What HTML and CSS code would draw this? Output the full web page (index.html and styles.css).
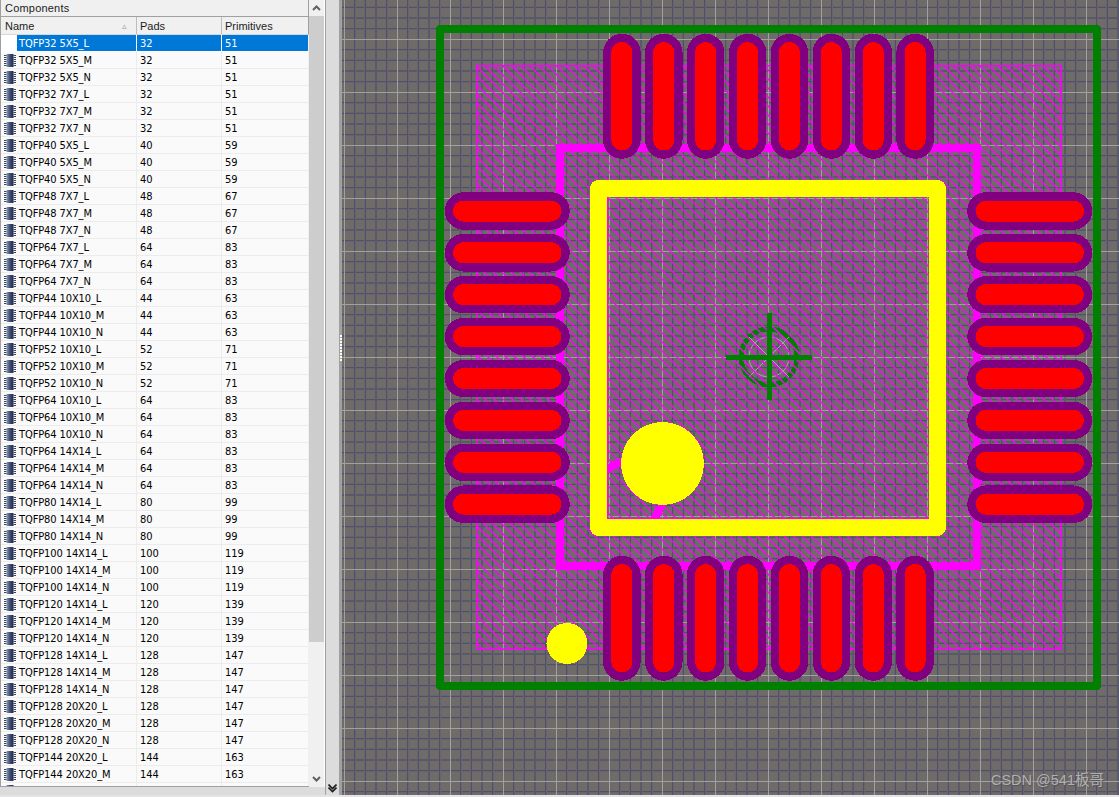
FILE: index.html
```html
<!DOCTYPE html>
<html lang="en">
<head>
<meta charset="utf-8">
<title>Components</title>
<link rel="stylesheet" href="styles.css">
</head>
<body>
<svg class="defs" width="0" height="0" aria-hidden="true">
  <defs>
    <linearGradient id="chipFill" x1="0" x2="1" y1="0" y2="0">
      <stop offset="0" stop-color="#8d99b5"/>
      <stop offset="0.5" stop-color="#3f4d74"/>
      <stop offset="1" stop-color="#1f2a47"/>
    </linearGradient>
    <symbol id="chip" viewBox="0 0 12 13">
      <rect x="2.5" y="0" width="7" height="13" fill="url(#chipFill)"/>
      <path d="M0 1.5h2.5M0 3.5h2.5M0 5.5h2.5M0 7.5h2.5M0 9.5h2.5M0 11.5h2.5M9.5 1.5h2.5M9.5 3.5h2.5M9.5 5.5h2.5M9.5 7.5h2.5M9.5 9.5h2.5M9.5 11.5h2.5" stroke="#39435f" stroke-width="1" fill="none"/>
    </symbol>
  </defs>
</svg>
<div class="app">
  <div class="main">
    <aside class="side">
      <section class="panel">
        <div class="panel-title">Components</div>
        <div class="list-head">
          <div class="hcell hcell-name">Name<span class="sort">▵</span></div>
          <div class="hcell hcell-pads">Pads</div>
          <div class="hcell hcell-prim">Primitives</div>
        </div>
        <div class="rows">
          <div class="row row-selected"><span class="c-icon"></span><span class="c-name">TQFP32 5X5_L</span><span class="c-pads">32</span><span class="c-prim">51</span></div>
          <div class="row"><span class="c-icon"><svg class="chip"><use href="#chip"/></svg></span><span class="c-name">TQFP32 5X5_M</span><span class="c-pads">32</span><span class="c-prim">51</span></div>
          <div class="row"><span class="c-icon"><svg class="chip"><use href="#chip"/></svg></span><span class="c-name">TQFP32 5X5_N</span><span class="c-pads">32</span><span class="c-prim">51</span></div>
          <div class="row"><span class="c-icon"><svg class="chip"><use href="#chip"/></svg></span><span class="c-name">TQFP32 7X7_L</span><span class="c-pads">32</span><span class="c-prim">51</span></div>
          <div class="row"><span class="c-icon"><svg class="chip"><use href="#chip"/></svg></span><span class="c-name">TQFP32 7X7_M</span><span class="c-pads">32</span><span class="c-prim">51</span></div>
          <div class="row"><span class="c-icon"><svg class="chip"><use href="#chip"/></svg></span><span class="c-name">TQFP32 7X7_N</span><span class="c-pads">32</span><span class="c-prim">51</span></div>
          <div class="row"><span class="c-icon"><svg class="chip"><use href="#chip"/></svg></span><span class="c-name">TQFP40 5X5_L</span><span class="c-pads">40</span><span class="c-prim">59</span></div>
          <div class="row"><span class="c-icon"><svg class="chip"><use href="#chip"/></svg></span><span class="c-name">TQFP40 5X5_M</span><span class="c-pads">40</span><span class="c-prim">59</span></div>
          <div class="row"><span class="c-icon"><svg class="chip"><use href="#chip"/></svg></span><span class="c-name">TQFP40 5X5_N</span><span class="c-pads">40</span><span class="c-prim">59</span></div>
          <div class="row"><span class="c-icon"><svg class="chip"><use href="#chip"/></svg></span><span class="c-name">TQFP48 7X7_L</span><span class="c-pads">48</span><span class="c-prim">67</span></div>
          <div class="row"><span class="c-icon"><svg class="chip"><use href="#chip"/></svg></span><span class="c-name">TQFP48 7X7_M</span><span class="c-pads">48</span><span class="c-prim">67</span></div>
          <div class="row"><span class="c-icon"><svg class="chip"><use href="#chip"/></svg></span><span class="c-name">TQFP48 7X7_N</span><span class="c-pads">48</span><span class="c-prim">67</span></div>
          <div class="row"><span class="c-icon"><svg class="chip"><use href="#chip"/></svg></span><span class="c-name">TQFP64 7X7_L</span><span class="c-pads">64</span><span class="c-prim">83</span></div>
          <div class="row"><span class="c-icon"><svg class="chip"><use href="#chip"/></svg></span><span class="c-name">TQFP64 7X7_M</span><span class="c-pads">64</span><span class="c-prim">83</span></div>
          <div class="row"><span class="c-icon"><svg class="chip"><use href="#chip"/></svg></span><span class="c-name">TQFP64 7X7_N</span><span class="c-pads">64</span><span class="c-prim">83</span></div>
          <div class="row"><span class="c-icon"><svg class="chip"><use href="#chip"/></svg></span><span class="c-name">TQFP44 10X10_L</span><span class="c-pads">44</span><span class="c-prim">63</span></div>
          <div class="row"><span class="c-icon"><svg class="chip"><use href="#chip"/></svg></span><span class="c-name">TQFP44 10X10_M</span><span class="c-pads">44</span><span class="c-prim">63</span></div>
          <div class="row"><span class="c-icon"><svg class="chip"><use href="#chip"/></svg></span><span class="c-name">TQFP44 10X10_N</span><span class="c-pads">44</span><span class="c-prim">63</span></div>
          <div class="row"><span class="c-icon"><svg class="chip"><use href="#chip"/></svg></span><span class="c-name">TQFP52 10X10_L</span><span class="c-pads">52</span><span class="c-prim">71</span></div>
          <div class="row"><span class="c-icon"><svg class="chip"><use href="#chip"/></svg></span><span class="c-name">TQFP52 10X10_M</span><span class="c-pads">52</span><span class="c-prim">71</span></div>
          <div class="row"><span class="c-icon"><svg class="chip"><use href="#chip"/></svg></span><span class="c-name">TQFP52 10X10_N</span><span class="c-pads">52</span><span class="c-prim">71</span></div>
          <div class="row"><span class="c-icon"><svg class="chip"><use href="#chip"/></svg></span><span class="c-name">TQFP64 10X10_L</span><span class="c-pads">64</span><span class="c-prim">83</span></div>
          <div class="row"><span class="c-icon"><svg class="chip"><use href="#chip"/></svg></span><span class="c-name">TQFP64 10X10_M</span><span class="c-pads">64</span><span class="c-prim">83</span></div>
          <div class="row"><span class="c-icon"><svg class="chip"><use href="#chip"/></svg></span><span class="c-name">TQFP64 10X10_N</span><span class="c-pads">64</span><span class="c-prim">83</span></div>
          <div class="row"><span class="c-icon"><svg class="chip"><use href="#chip"/></svg></span><span class="c-name">TQFP64 14X14_L</span><span class="c-pads">64</span><span class="c-prim">83</span></div>
          <div class="row"><span class="c-icon"><svg class="chip"><use href="#chip"/></svg></span><span class="c-name">TQFP64 14X14_M</span><span class="c-pads">64</span><span class="c-prim">83</span></div>
          <div class="row"><span class="c-icon"><svg class="chip"><use href="#chip"/></svg></span><span class="c-name">TQFP64 14X14_N</span><span class="c-pads">64</span><span class="c-prim">83</span></div>
          <div class="row"><span class="c-icon"><svg class="chip"><use href="#chip"/></svg></span><span class="c-name">TQFP80 14X14_L</span><span class="c-pads">80</span><span class="c-prim">99</span></div>
          <div class="row"><span class="c-icon"><svg class="chip"><use href="#chip"/></svg></span><span class="c-name">TQFP80 14X14_M</span><span class="c-pads">80</span><span class="c-prim">99</span></div>
          <div class="row"><span class="c-icon"><svg class="chip"><use href="#chip"/></svg></span><span class="c-name">TQFP80 14X14_N</span><span class="c-pads">80</span><span class="c-prim">99</span></div>
          <div class="row"><span class="c-icon"><svg class="chip"><use href="#chip"/></svg></span><span class="c-name">TQFP100 14X14_L</span><span class="c-pads">100</span><span class="c-prim">119</span></div>
          <div class="row"><span class="c-icon"><svg class="chip"><use href="#chip"/></svg></span><span class="c-name">TQFP100 14X14_M</span><span class="c-pads">100</span><span class="c-prim">119</span></div>
          <div class="row"><span class="c-icon"><svg class="chip"><use href="#chip"/></svg></span><span class="c-name">TQFP100 14X14_N</span><span class="c-pads">100</span><span class="c-prim">119</span></div>
          <div class="row"><span class="c-icon"><svg class="chip"><use href="#chip"/></svg></span><span class="c-name">TQFP120 14X14_L</span><span class="c-pads">120</span><span class="c-prim">139</span></div>
          <div class="row"><span class="c-icon"><svg class="chip"><use href="#chip"/></svg></span><span class="c-name">TQFP120 14X14_M</span><span class="c-pads">120</span><span class="c-prim">139</span></div>
          <div class="row"><span class="c-icon"><svg class="chip"><use href="#chip"/></svg></span><span class="c-name">TQFP120 14X14_N</span><span class="c-pads">120</span><span class="c-prim">139</span></div>
          <div class="row"><span class="c-icon"><svg class="chip"><use href="#chip"/></svg></span><span class="c-name">TQFP128 14X14_L</span><span class="c-pads">128</span><span class="c-prim">147</span></div>
          <div class="row"><span class="c-icon"><svg class="chip"><use href="#chip"/></svg></span><span class="c-name">TQFP128 14X14_M</span><span class="c-pads">128</span><span class="c-prim">147</span></div>
          <div class="row"><span class="c-icon"><svg class="chip"><use href="#chip"/></svg></span><span class="c-name">TQFP128 14X14_N</span><span class="c-pads">128</span><span class="c-prim">147</span></div>
          <div class="row"><span class="c-icon"><svg class="chip"><use href="#chip"/></svg></span><span class="c-name">TQFP128 20X20_L</span><span class="c-pads">128</span><span class="c-prim">147</span></div>
          <div class="row"><span class="c-icon"><svg class="chip"><use href="#chip"/></svg></span><span class="c-name">TQFP128 20X20_M</span><span class="c-pads">128</span><span class="c-prim">147</span></div>
          <div class="row"><span class="c-icon"><svg class="chip"><use href="#chip"/></svg></span><span class="c-name">TQFP128 20X20_N</span><span class="c-pads">128</span><span class="c-prim">147</span></div>
          <div class="row"><span class="c-icon"><svg class="chip"><use href="#chip"/></svg></span><span class="c-name">TQFP144 20X20_L</span><span class="c-pads">144</span><span class="c-prim">163</span></div>
          <div class="row"><span class="c-icon"><svg class="chip"><use href="#chip"/></svg></span><span class="c-name">TQFP144 20X20_M</span><span class="c-pads">144</span><span class="c-prim">163</span></div>
          <div class="row"><span class="c-icon"><svg class="chip"><use href="#chip"/></svg></span><span class="c-name"></span><span class="c-pads"></span><span class="c-prim"></span></div>
        </div>
      </section>
      <div class="vscroll">
        <div class="vscroll-btn"><svg class="arrow" viewBox="0 0 9 6"><path d="M1 5l3.5-3.5L8 5" fill="none" stroke="#606060" stroke-width="2"/></svg></div>
        <div class="vscroll-thumb"></div>
        <div class="vscroll-track"></div>
        <div class="vscroll-btn vscroll-btn-down"><svg class="arrow" viewBox="0 0 9 6"><path d="M1 1l3.5 3.5L8 1" fill="none" stroke="#606060" stroke-width="2"/></svg></div>
      </div>
      <div class="dock">
        <svg class="dock-glyph" viewBox="0 0 9 9"><path d="M0.5 0.5l4 4 4-4M0.5 3.5l4 4 4-4" fill="none" stroke="#1c1c1c" stroke-width="1.6"/></svg>
      </div>
      <div class="sash"><span class="grip"></span></div>
    </aside>
    <div class="canvas">
      <svg class="board" viewBox="342 0 777 795" width="777" height="795">
        <defs>
          <clipPath id="hatchClip"><rect x="476" y="65" width="586" height="585"/></clipPath>
          <line id="hl" class="hatch-line" x1="0" y1="0" x2="700" y2="700"/>
          <g id="h6"><use href="#hl" x="0"/><use href="#hl" x="9"/><use href="#hl" x="18"/><use href="#hl" x="27"/><use href="#hl" x="36"/><use href="#hl" x="45"/></g>
          <g id="h36"><use href="#h6" x="0"/><use href="#h6" x="54"/><use href="#h6" x="108"/><use href="#h6" x="162"/><use href="#h6" x="216"/><use href="#h6" x="270"/></g>
          <g id="padV">
            <line class="pad-mask" x1="0" y1="0" x2="0" y2="87.5"/>
            <line class="pad-red" x1="0" y1="0" x2="0" y2="87.5"/>
          </g>
          <g id="padH">
            <line class="pad-mask" x1="0" y1="0" x2="87.5" y2="0"/>
            <line class="pad-red" x1="0" y1="0" x2="87.5" y2="0"/>
          </g>
        </defs>
        <g class="target">
          <circle class="target-ring" cx="769" cy="357" r="28"/>
          <circle class="target-inner" cx="769" cy="357" r="20"/>
          <path class="target-inner" d="M749 337L789 377M789 337L749 377"/>
        </g>
        <g clip-path="url(#hatchClip)">
          <use href="#h36" x="-110" y="65"/>
          <use href="#h36" x="214" y="65"/>
          <use href="#h36" x="538" y="65"/>
          <use href="#h36" x="862" y="65"/>
        </g>
        <line class="target-cross" x1="769" y1="313" x2="769" y2="400"/>
        <line class="target-cross" x1="726" y1="357" x2="812" y2="357"/>
        <rect class="hatch-edge" x="476.75" y="65.75" width="584.5" height="583.5"/>
        <rect class="outline" x="440" y="29" width="657" height="657"/>
        <rect class="courtyard" x="560" y="148" width="417" height="418"/>
        <path class="courtyard-arc" d="M626 461Q614 463 604 472M664 500Q660 510 652 522"/>
        <path class="edge" d="M607 196H930V519H607ZM608 197V518H929V197Z"/>
        <rect class="silk" x="598.5" y="188.5" width="339" height="339"/>
        <circle class="dot" cx="662.5" cy="463.5" r="41.5"/>
        <circle class="dot" cx="567" cy="643.5" r="20.5"/>
        <g>
          <use href="#padV" x="621.9" y="52.5"/><use href="#padV" x="663.8" y="52.5"/><use href="#padV" x="705.7" y="52.5"/><use href="#padV" x="747.6" y="52.5"/><use href="#padV" x="789.5" y="52.5"/><use href="#padV" x="831.4" y="52.5"/><use href="#padV" x="873.3" y="52.5"/><use href="#padV" x="915.1" y="52.5"/>
          <use href="#padV" x="621.9" y="574.5"/><use href="#padV" x="663.8" y="574.5"/><use href="#padV" x="705.7" y="574.5"/><use href="#padV" x="747.6" y="574.5"/><use href="#padV" x="789.5" y="574.5"/><use href="#padV" x="831.4" y="574.5"/><use href="#padV" x="873.3" y="574.5"/><use href="#padV" x="915.1" y="574.5"/>
          <use href="#padH" x="463.5" y="211"/><use href="#padH" x="463.5" y="252.8"/><use href="#padH" x="463.5" y="294.7"/><use href="#padH" x="463.5" y="336.6"/><use href="#padH" x="463.5" y="378.5"/><use href="#padH" x="463.5" y="420.4"/><use href="#padH" x="463.5" y="462.3"/><use href="#padH" x="463.5" y="504.2"/>
          <use href="#padH" x="986" y="211"/><use href="#padH" x="986" y="252.8"/><use href="#padH" x="986" y="294.7"/><use href="#padH" x="986" y="336.6"/><use href="#padH" x="986" y="378.5"/><use href="#padH" x="986" y="420.4"/><use href="#padH" x="986" y="462.3"/><use href="#padH" x="986" y="504.2"/>
        </g>
      </svg>
      <div class="watermark">CSDN @541板哥</div>
    </div>
  </div>
  <div class="statusline"></div>
</div>
</body>
</html>
```
FILE: styles.css
```css
* { box-sizing: border-box; }
html, body { margin: 0; height: 100%; overflow: hidden; }
body {
  font-family: "Liberation Sans", Arial, sans-serif;
  font-size: 11px;
  color: #000;
  background: #dcdcdc;
}
.defs { position: absolute; }
.app { display: flex; flex-direction: column; height: 797px; width: 1119px; }
.main { display: flex; height: 795px; }
.statusline { height: 2px; background: #e4e4e4; }

/* left panel */
.side { display: flex; width: 342px; height: 795px; background: #dcdcdc; }
.panel {
  width: 309px;
  height: 787px;
  display: flex;
  flex-direction: column;
  background: #fff;
  border-left: 1px solid #a0a0a0;
  border-bottom: 1px solid #a0a0a0;
  overflow: hidden;
}
.panel-title {
  height: 16px;
  flex: none;
  padding-left: 4px;
  line-height: 16px;
  letter-spacing: 0.2px;
  background: #f0f0f0;
  color: #1c1c1c;
  border-right: 1px solid #a0a0a0;
}
.list-head {
  height: 19px;
  flex: none;
  display: flex;
  background: #f0f0f0;
  border-top: 1px solid #a0a0a0;
  border-bottom: 1px solid #d8d8d8;
  border-right: 1px solid #a0a0a0;
}
.hcell { line-height: 18px; padding-left: 4px; border-right: 1px solid #bdbdbd; position: relative; color: #1c1c1c; }
.hcell-name { width: 136px; }
.hcell-pads { width: 85px; padding-left: 3px; }
.hcell-prim { flex: 1; border-right: 0; padding-left: 3px; }
.sort { position: absolute; right: 9px; top: 0; color: #a0a0a0; font-size: 9px; }

.rows { flex: 1; overflow: hidden; border-right: 1px solid #f0f0f0; background: #fff; }
.row {
  height: 17px;
  display: flex;
  font-family: "DejaVu Sans Condensed", "DejaVu Sans", sans-serif;
  line-height: 17px;
  color: #000;
  background: #fafafa;
  border-bottom: 1px solid #ececec;
}
.c-icon { width: 16px; flex: none; display: flex; align-items: center; padding-left: 3px; }
.c-name { width: 120px; flex: none; padding-left: 2px; letter-spacing: -0.1px; border-right: 1px solid #ececec; white-space: nowrap; }
.c-pads { width: 85px; flex: none; padding-left: 3px; border-right: 1px solid #ececec; }
.c-prim { flex: 1; padding-left: 3px; }
.chip { width: 12px; height: 13px; display: block; }
.row-selected { border-bottom-color: #fff; background: #fff; }
.row-selected .c-name, .row-selected .c-pads, .row-selected .c-prim { background: #0078d7; color: #fff; border-right-color: #fff; }

/* scrollbar */
.vscroll { width: 16px; height: 787px; display: flex; flex-direction: column; background: #f0f0f0; border-right: 1px solid #fff; }
.vscroll-btn { height: 16px; flex: none; display: flex; align-items: center; justify-content: center; }
.vscroll-btn-down { height: 17px; }
.vscroll-thumb { height: 626px; flex: none; background: #cdcdcd; }
.vscroll-track { flex: 1; }
.arrow { width: 9px; height: 6px; }

.dock { width: 14px; height: 795px; display: flex; flex-direction: column; justify-content: flex-end; align-items: center; border-left: 1px solid #a0a0a0; padding-bottom: 2px; background: #dcdcdc; }
.dock-glyph { width: 9px; height: 9px; }
.sash { width: 3px; height: 795px; background: #a0a0a0; display: flex; align-items: center; position: relative; }
.grip {
  position: absolute;
  left: 1px;
  top: 335px;
  width: 2px;
  height: 26px;
  background: repeating-linear-gradient(#fff 0 2px, transparent 2px 3px);
}

/* canvas: the grid is painted as a repeating 53px background tile */
.canvas {
  position: relative;
  width: 777px;
  height: 795px;
  overflow: hidden;
  background-color: #6f6b69;
  background-image:
    linear-gradient(to right, #a0a0a0 0 1px, transparent 1px),
    linear-gradient(to bottom, #a0a0a0 0 1px, transparent 1px),
    linear-gradient(to right, transparent 0 10px, #50506a 10px 11px, #676470 11px 12px, transparent 12px 20px, #676470 20px 21px, #50506a 21px 22px, transparent 22px 31px, #5a596c 31px 33px, transparent 33px 42px, #50506a 42px 43px, #676470 43px 44px, transparent 44px),
    linear-gradient(to bottom, transparent 0 10px, #50506a 10px 11px, #676470 11px 12px, transparent 12px 20px, #676470 20px 21px, #50506a 21px 22px, transparent 22px 31px, #5a596c 31px 33px, transparent 33px 42px, #50506a 42px 43px, #676470 43px 44px, transparent 44px);
  background-size: 53px 53px;
  background-position: 2px 39px;
}
.board { display: block; shape-rendering: crispEdges; }
.hatch-line { stroke: #ff00ff; stroke-width: 1.3; shape-rendering: auto; }
.hatch-edge { fill: none; stroke: #ff00ff; stroke-width: 1.5; shape-rendering: auto; }
.edge { fill: #ff00ff; fill-rule: evenodd; }
.outline { fill: none; stroke: #008000; stroke-width: 8; stroke-linejoin: round; }
.courtyard { fill: none; stroke: #ff00ff; stroke-width: 8; }
.courtyard-arc { fill: none; stroke: #ff00ff; stroke-width: 8; }
.silk { fill: none; stroke: #ffff00; stroke-width: 17; stroke-linejoin: round; }
.dot { fill: #ffff00; }
.pad-mask { stroke: #800080; stroke-width: 37.5; stroke-linecap: round; }
.pad-red { stroke: #ff0000; stroke-width: 21; stroke-linecap: round; }
.target-cross { stroke: #008000; stroke-width: 5; }
.target-ring { fill: none; stroke: #008000; stroke-width: 5; }
.target-inner { fill: none; stroke: #a8a8a8; stroke-width: 1; shape-rendering: auto; }
.watermark {
  position: absolute;
  right: 15px;
  top: 771px;
  font-family: "Liberation Sans", "Noto Sans CJK SC", sans-serif;
  font-size: 14.5px;
  line-height: 18px;
  color: #b0b0b0;
  text-shadow: 1px 1px 1px #55555a;
  white-space: nowrap;
}
```
